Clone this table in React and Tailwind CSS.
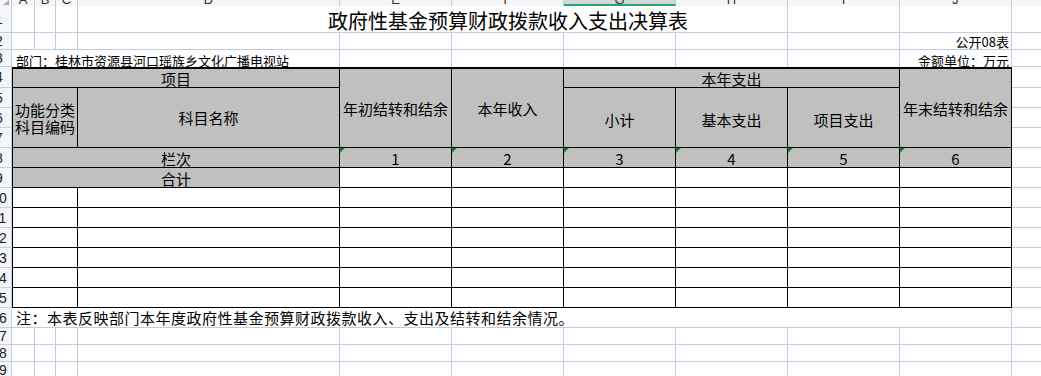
import React from "react";

const COL = ["", "col-start-1", "col-start-2", "col-start-3", "col-start-4", "col-start-5", "col-start-6", "col-start-7", "col-start-8", "col-start-9", "col-start-10", "col-start-11", "col-start-12"];
const ROW = ["", "row-start-1", "row-start-2", "row-start-3", "row-start-4", "row-start-5", "row-start-6", "row-start-7", "row-start-8", "row-start-9", "row-start-10", "row-start-11", "row-start-12", "row-start-13", "row-start-14", "row-start-15", "row-start-16", "row-start-17", "row-start-18", "row-start-19", "row-start-20"];
const CSPAN = ["", "col-span-1", "col-span-2", "col-span-3", "col-span-4", "col-span-5", "col-span-6", "col-span-7", "col-span-8", "col-span-9", "col-span-10"];
const RSPAN = ["", "row-span-1", "row-span-2", "row-span-3", "row-span-4"];

const Cell = ({ c, r, cs = 1, rs = 1, className = "", children }) => (
  <div className={`${COL[c]} ${ROW[r]} ${CSPAN[cs]} ${RSPAN[rs]} ${className}`}>{children}</div>
);

// gridline styles
const grid = "border-r border-b border-[#c3cbdf]";
const gridB = "border-b border-[#c3cbdf]";
// table styles
const gray = "bg-[#c0c0c0] border-r border-b border-black flex items-center justify-center text-[15px] leading-none";
const white = "border-r border-b border-black";

const LETTERS = ["A", "B", "C", "D", "E", "F", "G", "H", "I", "J", "K"];
const PLAIN_COLS = [2, 3, 4, 5, 6, 7, 8, 9, 10, 11];
const MONEY_COLS = [6, 7, 8, 9, 10, 11];
const DATA_ROWS = [11, 12, 13, 14, 15, 16];

const Flag = () => (
  <span className="absolute top-0 left-0 w-0 h-0 border-t-[5px] border-t-[#109010] border-r-[5px] border-r-transparent" />
);

const App = () => {
  return (
    <div className="w-[1041px] h-[376px] overflow-hidden bg-white text-black font-['Noto_Sans_CJK_SC',sans-serif]">
      <div className="grid grid-cols-[12px_23px_21px_22px_262px_112px_112px_112px_112px_112px_112px_90px] grid-rows-[6px_27px_17px_17px_21px_20px_20px_20px_20px_20px_20px_20px_20px_20px_20px_20px_20px_17px_17px_17px]">
        {/* column headers (scrolled, only the bottom shows) */}
        <Cell c={1} r={1} className="bg-[#f4f5f7] border-r border-[#b8c2d8] overflow-hidden">
          <svg width="12" height="6" viewBox="0 0 12 6">
            <polygon points="9,0 9,5 3,5" fill="#a9a9a9" />
          </svg>
        </Cell>
        {LETTERS.map((l, i) => (
          <Cell
            key={l}
            c={i + 2}
            r={1}
            className={`h-[6px] overflow-hidden border-r border-[#c3cbdf] ${l === "G" ? "bg-[#d3d6dc] border-b-2 border-b-[#22a86c]" : "bg-[#f4f5f7]"}`}
          >
            <div className="h-[18px] -mt-[9px] flex items-center justify-center text-[13px] text-[#333] font-['Liberation_Sans',sans-serif]">{l}</div>
          </Cell>
        ))}

        {/* row headers */}
        {Array.from({ length: 19 }, (_, i) => (
          <Cell key={i} c={1} r={i + 2} className="bg-[#f4f5f7] border-r border-b border-[#c8cfdf] overflow-hidden flex items-center">
            <div className="w-[26px] -ml-[14px] shrink-0 text-center text-[14px] leading-none text-[#222] font-['Liberation_Sans',sans-serif]">{i + 1}</div>
          </Cell>
        ))}

        {/* row 1: title */}
        <Cell c={2} r={2} className={grid} />
        <Cell c={3} r={2} className={grid} />
        <Cell c={4} r={2} className={grid} />
        <Cell c={5} r={2} className={gridB} />
        <Cell c={6} r={2} cs={3} className={`${gridB} flex items-end justify-center pb-[1px]`}>
          <span className="whitespace-nowrap text-[20px] leading-none">政府性基金预算财政拨款收入支出决算表</span>
        </Cell>
        <Cell c={9} r={2} className={grid} />
        <Cell c={10} r={2} className={grid} />
        <Cell c={11} r={2} className={grid} />
        <Cell c={12} r={2} className={gridB} />

        {/* row 2 */}
        {PLAIN_COLS.map((c) => (
          <Cell key={c} c={c} r={3} className={`${grid} flex items-end justify-end pr-[2px] pb-[1px]`}>
            {c === 11 && <span className="whitespace-nowrap text-[13px] leading-none">公开08表</span>}
          </Cell>
        ))}
        <Cell c={12} r={3} className={gridB} />

        {/* row 3 */}
        <Cell c={2} r={4} className="flex items-end pl-1">
          <span className="whitespace-nowrap text-[13px] leading-none">部门：桂林市资源县河口瑶族乡文化广播电视站</span>
        </Cell>
        <Cell c={3} r={4} />
        <Cell c={4} r={4} />
        {[5, 6, 7, 8, 9, 10].map((c) => (
          <Cell key={c} c={c} r={4} className="border-r border-[#c3cbdf]" />
        ))}
        <Cell c={11} r={4} className="border-r border-[#c3cbdf] flex items-end justify-end pr-[2px]">
          <span className="whitespace-nowrap text-[13px] leading-none">金额单位：万元</span>
        </Cell>
        <Cell c={12} r={4} className={gridB} />

        {/* table header */}
        <Cell c={2} r={5} cs={4} className={`${gray} border-l border-t-2`}>项目</Cell>
        <Cell c={6} r={5} rs={4} className={`${gray} border-t-2`}>年初结转和结余</Cell>
        <Cell c={7} r={5} rs={4} className={`${gray} border-t-2`}>本年收入</Cell>
        <Cell c={8} r={5} cs={3} className={`${gray} border-t-2`}>本年支出</Cell>
        <Cell c={11} r={5} rs={4} className={`${gray} border-t-2`}>年末结转和结余</Cell>

        <Cell c={2} r={6} cs={3} rs={3} className={`${gray} border-l`}>
          <span className="text-center leading-[17px]">
            功能分类
            <br />
            科目编码
          </span>
        </Cell>
        <Cell c={5} r={6} rs={3} className={gray}>科目名称</Cell>
        <Cell c={8} r={6} rs={3} className={`${gray} pt-[4px]`}>小计</Cell>
        <Cell c={9} r={6} rs={3} className={`${gray} pt-[4px]`}>基本支出</Cell>
        <Cell c={10} r={6} rs={3} className={`${gray} pt-[4px]`}>项目支出</Cell>

        {/* row 8: 栏次 */}
        <Cell c={2} r={9} cs={4} className={`${gray} border-l pt-[2px]`}>栏次</Cell>
        {MONEY_COLS.map((c, i) => (
          <Cell key={c} c={c} r={9} className={`${gray} relative pt-[2px]`}>
            <Flag />
            {i + 1}
          </Cell>
        ))}

        {/* row 9: 合计 */}
        <Cell c={2} r={10} cs={4} className={`${gray} border-l pt-[2px]`}>合计</Cell>
        {MONEY_COLS.map((c) => (
          <Cell key={c} c={c} r={10} className={white} />
        ))}

        {/* data rows */}
        {DATA_ROWS.map((r) => (
          <React.Fragment key={r}>
            <Cell c={2} r={r} cs={3} className={`${white} border-l`} />
            <Cell c={5} r={r} className={white} />
            {MONEY_COLS.map((c) => (
              <Cell key={c} c={c} r={r} className={white} />
            ))}
          </React.Fragment>
        ))}

        {/* column K beside the table */}
        {[5, 6, 7, 8, 9, 10, 11, 12, 13, 14, 15, 16].map((r) => (
          <Cell key={r} c={12} r={r} className={gridB} />
        ))}

        {/* row 16: note */}
        <Cell c={2} r={17} cs={10} className={`${grid} flex items-center pl-1`}>
          <span className="whitespace-nowrap text-[15px] leading-none tracking-[0.5px]">注：本表反映部门本年度政府性基金预算财政拨款收入、支出及结转和结余情况。</span>
        </Cell>
        <Cell c={12} r={17} className={gridB} />

        {/* rows 17-19 */}
        {[18, 19, 20].map((r) => (
          <React.Fragment key={r}>
            {PLAIN_COLS.map((c) => (
              <Cell key={c} c={c} r={r} className={grid} />
            ))}
            <Cell c={12} r={r} className={gridB} />
          </React.Fragment>
        ))}
      </div>
    </div>
  );
};

export default App;
